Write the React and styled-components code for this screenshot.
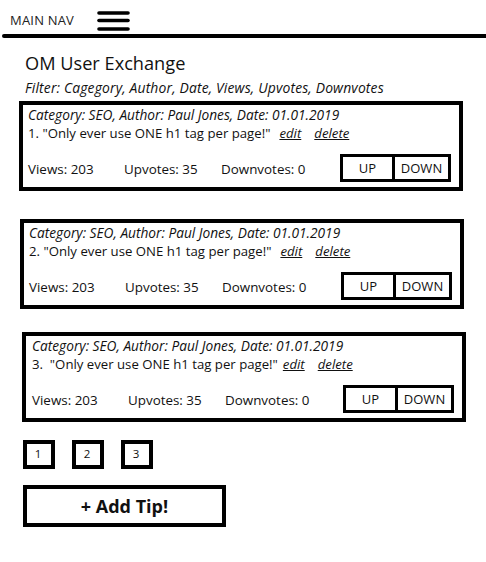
import React from "react";
import styled, { createGlobalStyle } from "styled-components";

const Global = createGlobalStyle`
  html, body { margin: 0; padding: 0; background: #fff; }
  body { font-family: "Open Sans", "Liberation Sans", sans-serif; color: #111; }
  * { box-sizing: border-box; }
`;

const Page = styled.div`
  width: 486px;
  min-height: 562px;
  background: #fff;
`;

const NavBar = styled.header`
  height: 34px;
  display: flex;
  align-items: center;
  padding: 6px 0 0 10px;
  gap: 23px;
`;

const NavLabel = styled.span`
  font-size: 13px;
  letter-spacing: 0.2px;
  color: #222;
`;

const Rule = styled.div`
  height: 4px;
  margin-left: 2px;
  background: #000;
  border-radius: 2px 0 0 2px;
`;

const Main = styled.main`
  padding: 13px 0 0 19px;
  display: flex;
  flex-direction: column;
`;

const Title = styled.h1`
  margin: 0 0 0 6px;
  font-size: 18.2px;
  font-weight: 400;
  line-height: 25px;
  color: #111;
`;

const Filter = styled.p`
  margin: 4px 0 0 6px;
  font-size: 13.9px;
  letter-spacing: 0.15px;
  font-style: italic;
  line-height: 16px;
  color: #111;
`;

const Card = styled.section`
  width: 444px;
  height: 90px;
  margin-top: ${(p) => p.$top}px;
  margin-left: ${(p) => p.$indent}px;
  border: 4px solid #000;
  padding: 1px 8px 5px 5px;
  display: flex;
  flex-direction: column;
`;

const Meta = styled.div`
  font-size: 13.7px;
  font-style: italic;
  line-height: 18px;
  padding-left: ${(p) => p.$pad || 0}px;
`;

const Quote = styled.div`
  font-size: 13.2px;
  line-height: 18px;
  white-space: pre;
  display: flex;
  padding-left: ${(p) => p.$pad || 0}px;
`;

const Action = styled.a`
  font-style: italic;
  text-decoration: underline;
  color: #111;
  margin-left: ${(p) => p.$gap}px;
`;

const Footer = styled.div`
  margin-top: 12px;
  display: flex;
  align-items: center;
  justify-content: space-between;
`;

const Stats = styled.div`
  display: grid;
  grid-template-columns: 96px 97px auto;
  font-size: 13.4px;
  padding-top: 2px;
  padding-left: ${(p) => p.$pad || 0}px;
`;

const Votes = styled.div`
  display: flex;
  height: 28px;
  border: 3px solid #000;
`;

const VoteButton = styled.button`
  width: ${(p) => p.$w}px;
  border: none;
  border-left: ${(p) => (p.$divider ? "3px solid #000" : "none")};
  background: #fff;
  font-family: "Open Sans", "Liberation Sans", sans-serif;
  font-size: 13px;
  color: #111;
  padding: 0;
`;

const Pager = styled.nav`
  display: flex;
  gap: 17px;
  margin: 18px 0 0 4px;
`;

const PageBox = styled.button`
  width: 32px;
  height: 29px;
  border: 4px solid #000;
  background: #fff;
  font-family: "Open Sans", "Liberation Sans", sans-serif;
  font-size: 11.5px;
  color: #111;
  padding: 0 2px 3px 0;
`;

const AddButton = styled.button`
  margin: 16px 0 0 4px;
  width: 203px;
  height: 42px;
  border: 4px solid #000;
  background: #fff;
  font-family: "Open Sans", "Liberation Sans", sans-serif;
  font-weight: 700;
  font-size: 18px;
  color: #111;
  padding: 0;
`;

const Hamburger = () => (
  <svg width="34" height="24" viewBox="0 0 34 24">
    <g stroke="#000" strokeWidth="3.6" strokeLinecap="round">
      <line x1="2" y1="5" x2="31" y2="5" />
      <line x1="2" y1="12.5" x2="31" y2="12.5" />
      <line x1="2" y1="21" x2="31" y2="21" />
    </g>
  </svg>
);

const tips = [
  { n: "1.", top: 5, indent: 0, pad: 0, gapEdit: 9, gapDel: 13 },
  { n: "2.", top: 28, indent: 1, pad: 0, gapEdit: 9, gapDel: 13 },
  { n: "3. ", top: 23, indent: 3, pad: 1, gapEdit: 5, gapDel: 13 },
];

export default function App() {
  return (
    <Page>
      <Global />
      <NavBar>
        <NavLabel>MAIN NAV</NavLabel>
        <Hamburger />
      </NavBar>
      <Rule />
      <Main>
        <Title>OM User Exchange</Title>
        <Filter>Filter: Cagegory, Author, Date, Views, Upvotes, Downvotes</Filter>
        {tips.map((t) => (
          <Card key={t.n} $top={t.top} $indent={t.indent}>
            <Meta $pad={t.pad}>Category: SEO, Author: Paul Jones, Date: 01.01.2019</Meta>
            <Quote $pad={t.pad}>
              <span>{t.n} "Only ever use ONE h1 tag per page!"</span>
              <Action $gap={t.gapEdit}>edit</Action>
              <Action $gap={t.gapDel}>delete</Action>
            </Quote>
            <Footer>
              <Stats $pad={t.pad}>
                <span>Views: 203</span>
                <span>Upvotes: 35</span>
                <span>Downvotes: 0</span>
              </Stats>
              <Votes>
                <VoteButton $w={49}>UP</VoteButton>
                <VoteButton $w={56} $divider>DOWN</VoteButton>
              </Votes>
            </Footer>
          </Card>
        ))}
        <Pager>
          <PageBox>1</PageBox>
          <PageBox>2</PageBox>
          <PageBox>3</PageBox>
        </Pager>
        <AddButton>+ Add Tip!</AddButton>
      </Main>
    </Page>
  );
}
